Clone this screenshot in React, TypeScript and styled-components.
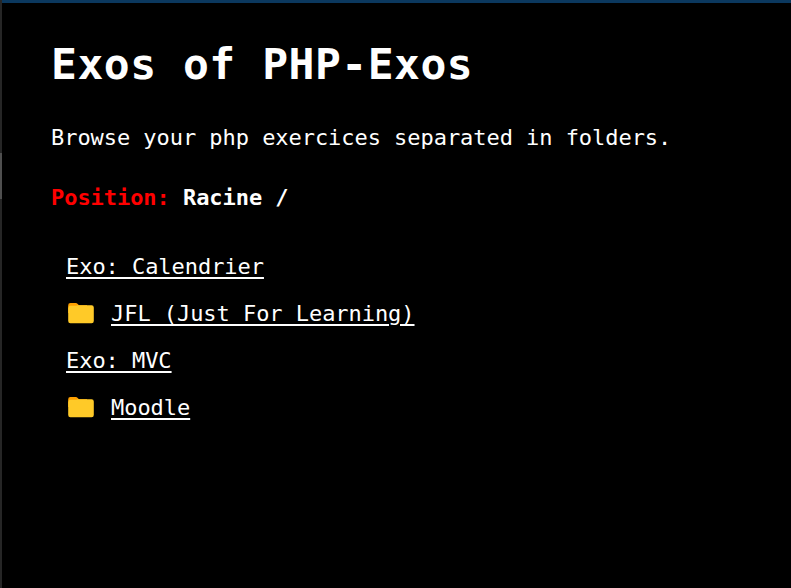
import React from "react";
import styled, { createGlobalStyle } from "styled-components";

const GlobalStyle = createGlobalStyle`
  html, body { margin: 0; background: #000; overflow: hidden; }
  *, *::before, *::after { box-sizing: border-box; }
`;

const Frame = styled.div`
  display: grid;
  grid-template-columns: 2px 1fr;
  width: 100vw;
  height: 100vh;
  background: #000;
  color: #fff;
  font-family: "DejaVu Sans Mono", "Liberation Mono", monospace;
  font-size: 22px;
  letter-spacing: -0.049px;
`;

const EdgeRail = styled.div`
  padding-top: 153px;
  background: #262626;
`;

const EdgeThumb = styled.div`
  height: 46px;
  background: #4f4f4f;
`;

const Page = styled.main`
  border-top: 3px solid #0a3558;
  border-image: linear-gradient(#0b385e 0 67%, #062038 67%) 3;
  padding: 33px 49px;
`;

const Title = styled.h1`
  margin: 0;
  font-size: 43px;
  line-height: 56px;
  letter-spacing: 0.503px;
  white-space: nowrap;
`;

const Intro = styled.p`
  margin: 32px 0 0;
  line-height: 28px;
  white-space: nowrap;
`;

const Position = styled.p`
  margin: 32px 0 0;
  line-height: 28px;
  font-weight: 700;
`;

const PositionLabel = styled.span`
  color: #f00;
`;

const List = styled.ul`
  display: grid;
  grid-auto-rows: 47px;
  margin: 30px 0 0;
  padding: 0 0 0 15px;
  list-style: none;
`;

const Item = styled.li`
  display: flex;
  align-items: center;
  height: 47px;
`;

const ExoLink = styled.a`
  padding-top: 2px;
  color: #fff;
  line-height: 28px;
  white-space: nowrap;
  text-decoration: underline;
  text-decoration-thickness: 2px;
  text-underline-offset: 3px;
`;

const FolderSvg = styled.svg`
  flex: none;
  width: 30px;
  height: 24px;
  margin-right: 15px;
`;

const FolderIcon = () => (
  <FolderSvg viewBox="0 0 30 24" aria-hidden="true">
    <path
      d="M2.2 12V4.2A2.2 2.2 0 0 1 4.4 2h5.3c.8 0 1.5.3 2 .9L13 4.3h8V12z"
      fill="#ffa000"
    />
    <path
      d="M2.2 7.2a2.4 2.4 0 0 1 2.4-2.4h5.6l2-.6h13.4a2.2 2.2 0 0 1 2.2 2.2V20a2.2 2.2 0 0 1-2.2 2.2H4.4A2.2 2.2 0 0 1 2.2 20z"
      fill="#ffca28"
    />
  </FolderSvg>
);

const entries = [
  { name: "Exo: Calendrier", folder: false },
  { name: "JFL (Just For Learning)", folder: true },
  { name: "Exo: MVC", folder: false },
  { name: "Moodle", folder: true },
];

export default function App() {
  return (
    <>
      <GlobalStyle />
      <Frame>
        <EdgeRail>
          <EdgeThumb />
        </EdgeRail>
        <Page>
          <Title>Exos of PHP-Exos</Title>
          <Intro>Browse your php exercices separated in folders.</Intro>
          <Position>
            <PositionLabel>Position:</PositionLabel> Racine /
          </Position>
          <List>
            {entries.map(({ name, folder }) => (
              <Item key={name}>
                {folder && <FolderIcon />}
                <ExoLink href="#">{name}</ExoLink>
              </Item>
            ))}
          </List>
        </Page>
      </Frame>
    </>
  );
}
